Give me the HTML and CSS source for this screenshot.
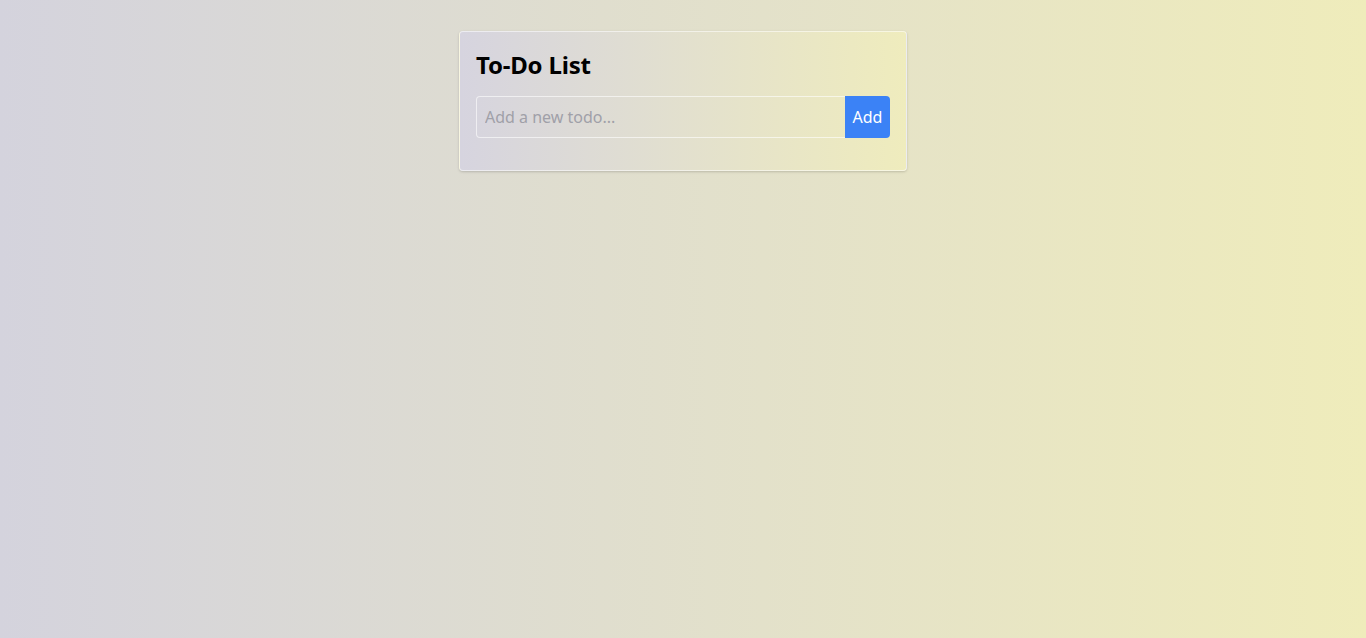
FILE: index.html
```html
<!DOCTYPE html>
<html lang="en">
<head>
<meta charset="utf-8">
<title>To-Do List</title>
<link rel="stylesheet" href="styles.css">
</head>
<body>
<main class="page">
  <section class="card">
    <h1 class="title">To-Do List</h1>
    <form class="add-row">
      <input class="todo-input" type="text" placeholder="Add a new todo...">
      <button class="add-btn" type="button">Add</button>
    </form>
    <ul class="todo-list"></ul>
  </section>
</main>
</body>
</html>
```
FILE: styles.css
```css
* { box-sizing: border-box; }
html, body { margin: 0; padding: 0; height: 100%; }
body {
  font-family: "Noto Sans", "Open Sans", sans-serif;
  background: linear-gradient(to right, #d4d3dd 0%, #efecbb 100%);
  min-height: 100vh;
}
.page {
  display: flex;
  justify-content: center;
  padding-top: 31px;
}
.card {
  width: 448px;
  padding: 16px;
  border: 1px solid rgba(255,255,255,0.55);
  border-radius: 4px;
  background: linear-gradient(to right, #d6d4df 0%, #efecbd 100%);
  box-shadow: 0 1px 3px rgba(0,0,0,0.12), 0 1px 2px rgba(0,0,0,0.06);
}
.title {
  margin: 0 0 15px;
  padding-top: 1px;
  font-size: 24px;
  line-height: 32px;
  font-weight: 700;
  letter-spacing: -0.2px;
  color: #000;
}
.add-row {
  display: flex;
  margin: 0 0 16px;
}
.todo-input {
  flex: 1;
  min-width: 0;
  height: 42px;
  padding: 8px;
  font: inherit;
  font-size: 16px;
  line-height: 24px;
  color: #111;
  background: transparent;
  border: 1px solid rgba(255,255,255,0.6);
  border-right: none;
  border-radius: 4px 0 0 4px;
  outline: none;
}
.todo-input::placeholder { color: #a0a0a8; }
.add-btn {
  width: 45px;
  height: 42px;
  padding: 0;
  font: inherit;
  font-size: 16px;
  color: #fff;
  background: #3b82f6;
  border: none;
  border-radius: 0 4px 4px 0;
}
.todo-list { margin: 0; padding: 0; list-style: none; }
```
